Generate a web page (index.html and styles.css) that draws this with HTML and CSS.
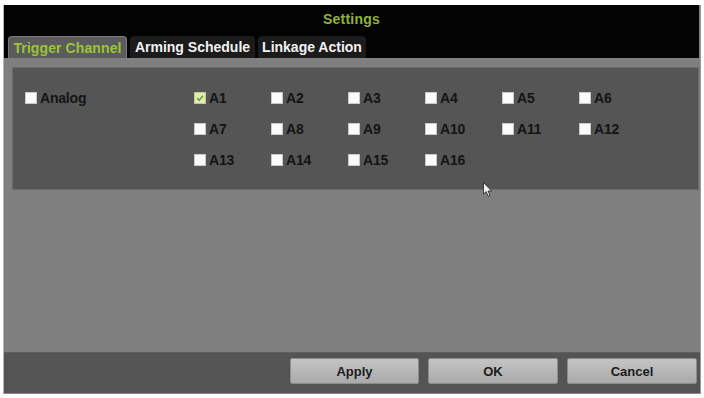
FILE: index.html
```html
<!DOCTYPE html>
<html>
<head>
<meta charset="utf-8">
<link rel="stylesheet" href="styles.css">
</head>
<body>
<div class="window">
  <div class="header">
    <div class="title">Settings</div>
    <div class="tabs">
      <div class="tab active t1">Trigger Channel</div>
      <div class="tab t2">Arming Schedule</div>
      <div class="tab t3">Linkage Action</div>
    </div>
  </div>
  <div class="body">
    <div class="panel">
      <label class="item analog"><span class="cb"></span>Analog</label>
      <div class="grid">
        <label class="item"><span class="cb checked"><svg viewBox="0 0 12 12" width="12" height="12"><path d="M2.5 6.2 L5 8.6 L9.6 3.4" fill="none" stroke="#5c9a2a" stroke-width="1.8"/></svg></span>A1</label>
        <label class="item"><span class="cb"></span>A2</label>
        <label class="item"><span class="cb"></span>A3</label>
        <label class="item"><span class="cb"></span>A4</label>
        <label class="item"><span class="cb"></span>A5</label>
        <label class="item"><span class="cb"></span>A6</label>
        <label class="item"><span class="cb"></span>A7</label>
        <label class="item"><span class="cb"></span>A8</label>
        <label class="item"><span class="cb"></span>A9</label>
        <label class="item"><span class="cb"></span>A10</label>
        <label class="item"><span class="cb"></span>A11</label>
        <label class="item"><span class="cb"></span>A12</label>
        <label class="item"><span class="cb"></span>A13</label>
        <label class="item"><span class="cb"></span>A14</label>
        <label class="item"><span class="cb"></span>A15</label>
        <label class="item"><span class="cb"></span>A16</label>
      </div>
      <svg class="cursor" viewBox="0 0 10 16" width="10" height="16"><path d="M0.5 0.5 L0.5 12 L3.2 9.6 L5.2 14.2 L7 13.4 L5 9 L8.6 9 Z" fill="#f2f2f2" stroke="#222" stroke-width="0.8"/></svg>
    </div>
  </div>
  <div class="footer">
    <button class="btn b1">Apply</button>
    <button class="btn">OK</button>
    <button class="btn">Cancel</button>
  </div>
</div>
</body>
</html>
```
FILE: styles.css
```css
html, body {
  margin: 0;
  padding: 0;
  background: #ffffff;
  width: 704px;
  height: 398px;
  overflow: hidden;
}
body {
  font-family: "Liberation Sans", Arial, sans-serif;
  padding-top: 5px;
  padding-left: 3px;
  box-sizing: border-box;
}
.window {
  width: 698px;
  height: 389px;
  background: #7f7f7f;
  border-left: 1px solid #b5b5b5;
  border-right: 1px solid #9a9a9a;
  border-bottom: 1px solid #8a8a8a;
  box-sizing: border-box;
  display: flex;
  flex-direction: column;
}
.header {
  background: #030303;
  height: 53px;
  display: flex;
  flex-direction: column;
  margin-right: 1px;
}
.title {
  height: 31px;
  display: flex;
  align-items: center;
  justify-content: center;
  color: #8fb43a;
  font-weight: bold;
  font-size: 14px;
  letter-spacing: 0.2px;
  padding-bottom: 4px;
  box-sizing: border-box;
}
.tabs {
  display: flex;
  gap: 3px;
  padding-left: 4px;
  height: 22px;
}
.tab {
  height: 22px;
  box-sizing: border-box;
  display: flex;
  align-items: center;
  justify-content: center;
  font-size: 14px;
  font-weight: bold;
  color: #f2f2f2;
  background: #1b1b1b;
  border-radius: 4px 4px 0 0;
  white-space: nowrap;
}
.t1 { width: 119px; letter-spacing: 0.1px; }
.t2 { width: 125px; letter-spacing: 0px; }
.t3 { width: 108px; letter-spacing: 0px; }
.tab.active {
  background: #5b5b5b;
  color: #9bc43c;
  border: 1px solid #7a7a7a;
  border-bottom: none;
}
.body {
  flex: 1;
  padding: 9px 1px 0 8px;
  box-sizing: border-box;
}
.panel {
  position: relative;
  height: 123px;
  background: #555555;
  border: 1px solid #6a6a6a;
  box-sizing: border-box;
  display: flex;
  padding: 23px 0 0 12px;
}
.item {
  display: flex;
  align-items: center;
  height: 14px;
  font-size: 14px;
  font-weight: bold;
  color: #141414;
  letter-spacing: -0.2px;
}
.analog {
  width: 169px;
  flex: none;
}
.grid {
  display: grid;
  grid-template-columns: repeat(6, 77px);
  grid-auto-rows: 14px;
  row-gap: 17px;
}
.cb {
  width: 12px;
  height: 12px;
  background: #fbfbfb;
  border: 1px solid #c8c8c8;
  box-sizing: border-box;
  margin-right: 3px;
  flex: none;
  display: flex;
}
.cb.checked {
  background: #e4ecb4;
  border-color: #bcc890;
}
.cb svg {
  display: block;
  width: 10px;
  height: 10px;
}
.cursor {
  position: absolute;
  left: 470px;
  top: 114px;
}
.footer {
  height: 41px;
  background: #545454;
  display: flex;
  justify-content: flex-end;
  align-items: flex-start;
  gap: 9px;
  padding: 5px 3px 0 0;
  box-sizing: border-box;
  border-top: 1px solid #5e5e5e;
}
.btn {
  width: 130px;
  height: 26px;
  border: 1px solid #8c8c8c;
  border-radius: 2px;
  background: linear-gradient(#c4c4c4, #aaaaaa);
  font-family: "Liberation Sans", Arial, sans-serif;
  font-weight: bold;
  font-size: 13px;
  color: #1c1c1c;
  padding: 0;
}
.b1 { width: 129px; }
```
